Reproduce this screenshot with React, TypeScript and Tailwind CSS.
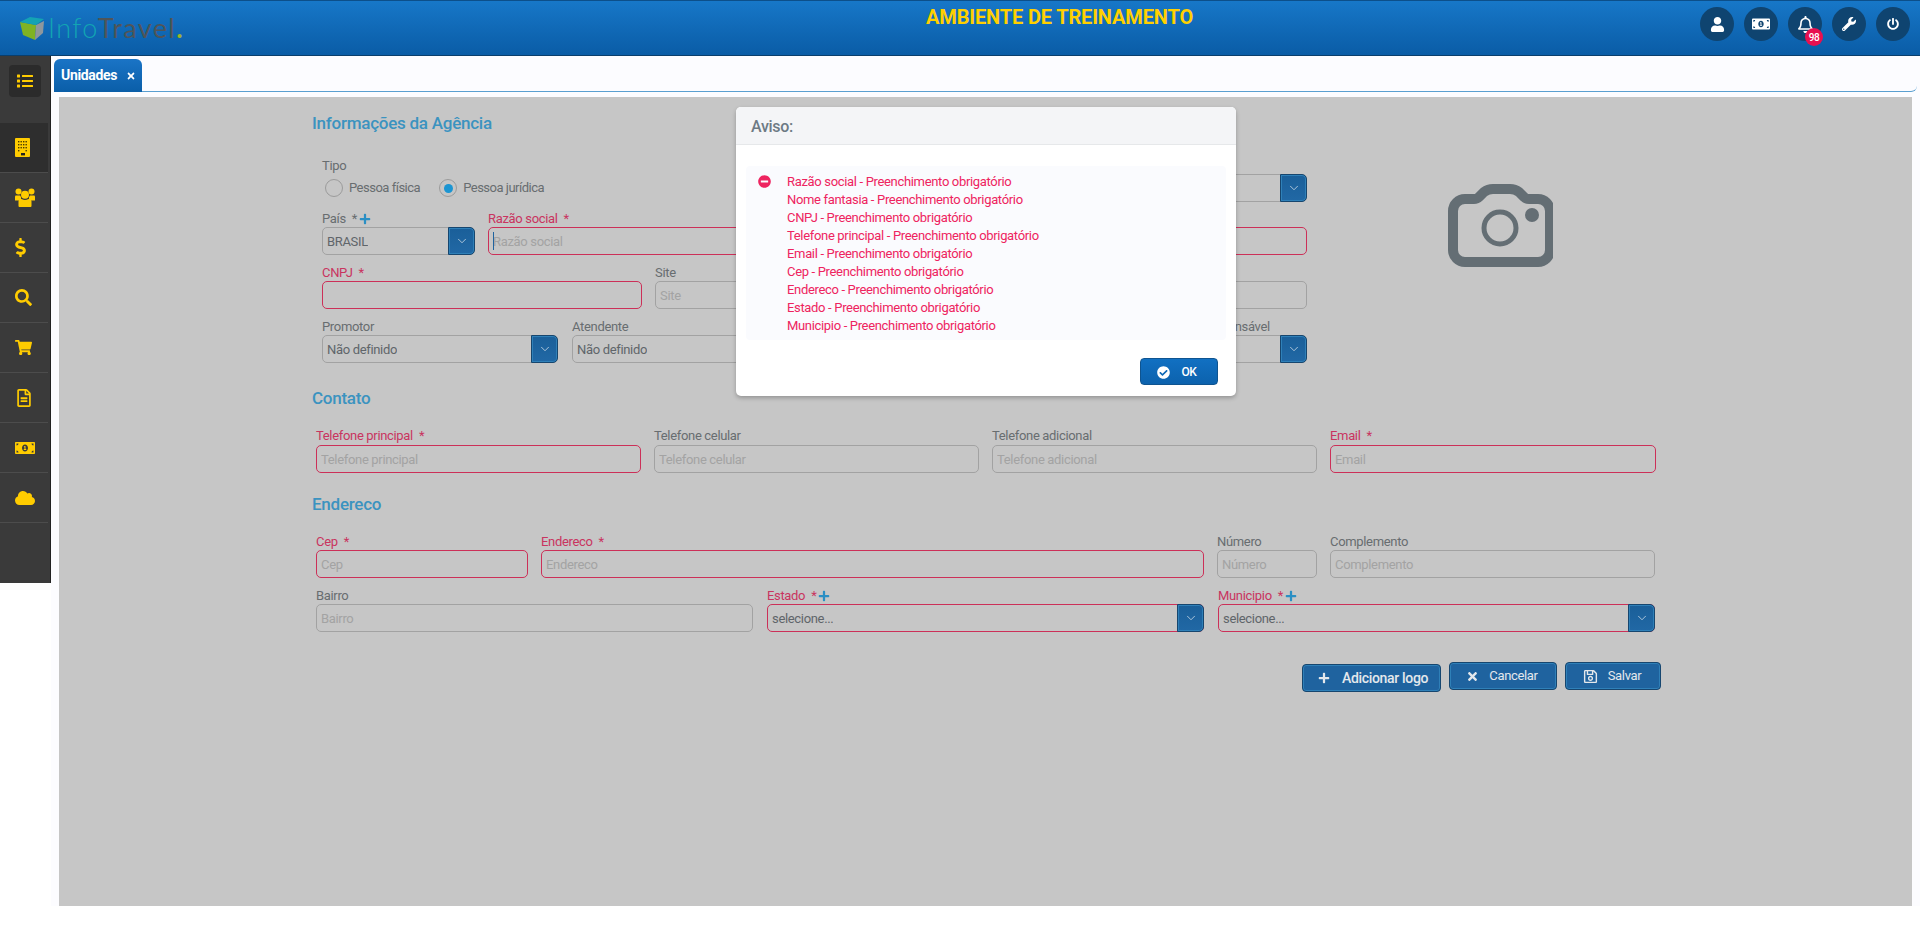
import React from "react";
import { ChevronDown } from "lucide-react";
import {
  FaUser, FaMoneyBillAlt, FaRegBell, FaWrench, FaPowerOff, FaList, FaDollarSign,
  FaSearch, FaShoppingCart, FaRegFileAlt, FaCloud, FaPlus, FaTimes, FaCheckCircle, FaMinusCircle, FaRegSave,
} from "react-icons/fa";

const Building = () => (
  <svg width="15" height="19" viewBox="0 0 15 19">
    <rect x="0" y="0" width="15" height="19" rx="1" fill="#ffcc00" />
    {[3, 6, 9].map((y) =>
      [3, 5.5, 8, 10.5].map((x) => <rect key={`${x}-${y}`} x={x} y={y} width="1.4" height="1.4" fill="#4a3c00" />)
    )}
    <rect x="3" y="12" width="1.4" height="1.4" fill="#4a3c00" />
    <rect x="10.5" y="12" width="1.4" height="1.4" fill="#4a3c00" />
    <rect x="6" y="15" width="4" height="2.4" fill="#222" />
  </svg>
);

const People = () => (
  <svg width="20" height="19" viewBox="0 0 20 19" fill="#ffcc00">
    <circle cx="3.5" cy="3.5" r="3" />
    <circle cx="16.5" cy="3.5" r="3" />
    <path d="M0 8.5 q0 -1 1 -1 h4 l1 1.5 v3.5 h-6 Z" />
    <path d="M20 8.5 q0 -1 -1 -1 h-4 l-1 1.5 v3.5 h6 Z" />
    <circle cx="10" cy="6.8" r="4" />
    <path d="M3.5 18 v-4.5 q0 -2.5 3 -2.5 q3.5 2 7 0 q3 0 3 2.5 V18 q0 1 -1 1 h-11 q-1 0 -1 -1 Z" />
  </svg>
);

const Logo = () => (
  <div className="flex items-center">
    <svg width="25" height="24" viewBox="0 0 25 24">
      <path d="M0 6 L16 9 L15 24 L3 19 Z" fill="#7fb324" />
      <path d="M16 9 L24 5 L23 17 L15 24 Z" fill="#8f979d" />
      <path d="M0 6 L10 1 L24 3 L16 9 Z" fill="#14a3b4" />
    </svg>
    <span className="ml-[3px] font-[family-name:Lato,sans-serif] text-[27px] leading-none font-light tracking-[1.4px] text-[#12a5b3]">Info</span>
    <span className="-ml-[1px] font-[family-name:Lato,sans-serif] text-[27px] leading-none font-normal tracking-[1.4px] text-[#4f5559]">Travel</span>
    <span className="font-[family-name:Lato,sans-serif] text-[27px] leading-none font-bold text-[#9ab52a]">.</span>
  </div>
);

const TopIcon = ({ children, badge }: { children: React.ReactNode; badge?: string }) => (
  <div className="relative flex h-[34px] w-[34px] items-center justify-center rounded-full bg-[#0f4470] text-white">
    {children}
    {badge && (
      <span className="absolute left-[17px] top-[21px] flex h-[18px] w-[18px] items-center justify-center rounded-full bg-[#e8104f] text-[10px] font-medium text-white">
        {badge}
      </span>
    )}
  </div>
);

const Label = ({ text, req, plus, err }: { text: string; req?: boolean; plus?: boolean; err?: boolean }) => (
  <div className={`lbl flex h-[18px] items-center text-[13px] leading-[18px] ${err ? "text-[#c9345f]" : "text-[#686d70]"}`}>
    <span>{text}</span>
    {req && <span className="ml-[6px]">*</span>}
    {plus && <FaPlus className="ml-[2px] text-[#2a8fc4]" size={12} />}
  </div>
);

const Input = ({ text, req, err, w, ph = true, caret }: { text: string; req?: boolean; err?: boolean; w: string; ph?: boolean; caret?: boolean }) => (
  <div className={`${w} shrink-0`}>
    <Label text={text} req={req} err={err} />
    <div className="relative">
      <input
        readOnly
        placeholder={ph ? text : ""}
        className={`block h-[28px] w-full rounded-[5px] border bg-transparent px-[4px] text-[13px] text-[#555] outline-none placeholder:text-[#a3a3a3] ${err ? "border-[#cc3058]" : "border-[#a2a2a2]"}`}
      />
      {caret && <span className="absolute left-[5px] top-[5px] h-[18px] w-px bg-[#1f639f]" />}
    </div>
  </div>
);

const Select = ({ text, value, req, plus, err, w, labelClass }: { text: string; value: string; req?: boolean; plus?: boolean; err?: boolean; w: string; labelClass?: string }) => (
  <div className={`${w} shrink-0`}>
    <div className={labelClass}>
      <Label text={text} req={req} plus={plus} err={err} />
    </div>
    <div className={`flex h-[28px] items-center justify-between rounded-[5px] border ${err ? "border-[#cc3058]" : "border-[#a2a2a2]"}`}>
      <span className="truncate pl-[4px] pt-px text-[13px] text-[#60656a]">{value}</span>
      <span className="-my-px -mr-px flex h-[28px] w-[27px] shrink-0 items-center justify-center rounded-r-[5px] border border-[#16466f] bg-gradient-to-b from-[#1a5f99] to-[#2168a5] text-[#dfe7ee] shadow-[inset_0_0_0_1px_#2f80b8]">
        <ChevronDown size={14} strokeWidth={1.25} />
      </span>
    </div>
  </div>
);

const Title = ({ children, className }: { children: React.ReactNode; className?: string }) => (
  <h2 className={`ml-[253px] translate-y-px text-[17px] font-medium leading-[24px] tracking-[-0.25px] text-[#3b93c0] ${className ?? ""}`}>{children}</h2>
);

const Radio = ({ label, checked }: { label: string; checked?: boolean }) => (
  <div className="flex items-center gap-[6px]">
    <span className="flex h-[18px] w-[18px] items-center justify-center rounded-full border border-[#9b9b9b]">
      {checked && <span className="h-[9px] w-[9px] rounded-full bg-[#1b95d2]" />}
    </span>
    <span className="text-[13px] tracking-[-0.5px] text-[#686d70]">{label}</span>
  </div>
);

const Btn = ({ children, w, className }: { children: React.ReactNode; w: string; className?: string }) => (
  <div className={`flex h-[28px] items-center justify-center gap-[10px] rounded-[4px] border border-[#16466f] bg-[#1f639f] text-[#e4e8ec] shadow-[inset_0_0_0_1px_#2f80b8] ${w} ${className ?? "pr-[2px] text-[13px]"}`}>
    {children}
  </div>
);

const errors = [
  "Razão social", "Nome fantasia", "CNPJ", "Telefone principal", "Email", "Cep", "Endereco", "Estado", "Municipio",
];

const nav = [
  <Building />, <People />, <FaDollarSign size={19} className="-ml-[4px]" />, <FaSearch size={17} />,
  <FaShoppingCart size={17} />, <FaRegFileAlt size={18} />, <FaMoneyBillAlt size={20} />, <FaCloud size={20} />,
];

export default function App() {
  return (
    <div className="flex h-[930px] flex-col overflow-hidden bg-white font-[family-name:Roboto,sans-serif] tracking-[-0.33px]">
      <header className="relative flex h-[56px] shrink-0 items-start justify-between border-t border-b border-t-[#0c4f8a] border-b-[#0a3e6c] bg-gradient-to-b from-[#1777c8] to-[#0a5ca6] pl-[20px] pr-[10px]">
        <div className="mt-[13px]"><Logo /></div>
        <div className="absolute left-[926px] top-[3px] text-[20px] font-bold leading-[26px] tracking-[-0.15px] text-[#ffd000]">AMBIENTE DE TREINAMENTO</div>
        <div className="mt-[6px] flex gap-[10px]">
          <TopIcon><FaUser size={15} /></TopIcon>
          <TopIcon><FaMoneyBillAlt size={18} /></TopIcon>
          <TopIcon badge="98"><FaRegBell size={17} /></TopIcon>
          <TopIcon><FaWrench size={14} /></TopIcon>
          <TopIcon><FaPowerOff size={12} /></TopIcon>
        </div>
      </header>

      <div className="flex flex-1 items-start">
        <aside className="h-[527px] w-[51px] shrink-0 border-r border-r-[#222] bg-[#3a3a3a] pt-[9px]">
          <div className="ml-[9px] flex h-[32px] w-[32px] items-center justify-center rounded-[4px] bg-[#2b2b2b] text-[#ffcc00]">
            <FaList size={16} />
          </div>
          <div className="mt-[26px] w-[48px]">
            {nav.map((icon, i) => (
              <div key={i} className={`flex h-[50px] items-center border-b border-b-[#4c4c4c] pl-[15px] text-[#ffcc00] ${i === 0 ? "bg-[#2e2e2e]" : ""}`}>
                {icon}
              </div>
            ))}
          </div>
        </aside>

        <main className="flex h-[850px] flex-1 flex-col bg-[#fcfcff]">
          <div className="mr-[3px] ml-[3px] mt-[2px] flex h-[34px] shrink-0 items-end rounded-br-[6px] border-b border-b-[#5a9fd0]">
            <div className="-mb-px flex h-[33px] w-[88px] items-center rounded-t-[6px] bg-gradient-to-b from-[#1a74c6] to-[#0a5ea8] pl-[7px] text-[14px] font-bold text-white">
              <span>Unidades</span>
              <FaTimes size={10} className="ml-[9px]" />
            </div>
          </div>

          <div className="relative ml-[8px] mr-[8px] mt-[5px] h-[809px] bg-[#c6c6c6]">
            <div className="pt-[13px]">
              <Title>Informações da Agência</Title>
              <div className="ml-[263px] mt-[22px] w-[985px] [&_.lbl]:translate-y-px">
                <div className="flex justify-between">
                  <div>
                    <Label text="Tipo" />
                    <div className="flex h-[28px] items-center gap-[19px] pl-[3px]">
                      <Radio label="Pessoa física" />
                      <Radio label="Pessoa jurídica" checked />
                    </div>
                  </div>
                  <Select text="Situação" value="" w="w-[235px]" />
                </div>
                <div className="mt-[7px] flex gap-[13px]">
                  <Select text="País" value="BRASIL" req plus w="w-[153px]" />
                  <Input text="Razão social" req err w="w-[409px]" caret />
                  <Input text="Nome fantasia" req err w="w-[397px]" />
                </div>
                <div className="mt-[8px] flex gap-[13px]">
                  <Input text="CNPJ" req err ph={false} w="w-[320px]" />
                  <Input text="Site" w="w-[325px]" />
                  <Input text="Inscrição" w="w-[314px]" />
                </div>
                <div className="mt-[8px] flex gap-[14px]">
                  <Select text="Promotor" value="Não definido" w="w-[236px]" />
                  <Select text="Atendente" value="Não definido" w="w-[236px]" />
                  <Select text="Gerente" value="Não definido" w="w-[236px]" />
                  <Select text="Responsável" value="Não definido" w="w-[235px]" labelClass="pl-[128px]" />
                </div>
              </div>

              <Title className="mt-[22px]">Contato</Title>
              <div className="ml-[257px] mt-[18px] flex gap-[13px]">
                <Input text="Telefone principal" req err w="w-[325px]" />
                <Input text="Telefone celular" w="w-[325px]" />
                <Input text="Telefone adicional" w="w-[325px]" />
                <Input text="Email" req err w="w-[326px]" />
              </div>

              <Title className="mt-[18px]">Endereco</Title>
              <div className="[&_.lbl]:translate-y-px">
                <div className="ml-[257px] mt-[17px] flex gap-[13px]">
                  <Input text="Cep" req err w="w-[212px]" />
                  <Input text="Endereco" req err w="w-[663px]" />
                  <Input text="Número" w="w-[100px]" />
                  <Input text="Complemento" w="w-[325px]" />
                </div>
                <div className="ml-[257px] mt-[8px] flex gap-[14px]">
                  <Input text="Bairro" w="w-[437px]" />
                  <Select text="Estado" value="selecione..." req plus err w="w-[437px]" />
                  <Select text="Municipio" value="selecione..." req plus err w="w-[437px]" />
                </div>
              </div>
            </div>

            <div className="ml-[1243px] mt-[30px] flex items-start gap-[8px]">
              <Btn w="w-[139px]" className="mt-[2px] !justify-start !gap-[12px] pl-[15px] text-[14px] font-medium"><FaPlus size={12} /> Adicionar logo</Btn>
              <Btn w="w-[108px]"><FaTimes size={13} /> Cancelar</Btn>
              <Btn w="w-[96px]"><FaRegSave size={15} /> Salvar</Btn>
            </div>

            <svg className="absolute left-[1389px] top-[87px]" width="105" height="83" viewBox="0 0 105 83" fill="none">
              <path d="M5 27 a12 12 0 0 1 12 -12 h9 q3 0 5 -2 l5 -5 q4 -3 9 -3 h17 q5 0 9 3 l5 5 q2 2 5 2 h9 a12 12 0 0 1 12 12 v39 a12 12 0 0 1 -12 12 H17 a12 12 0 0 1 -12 -12 Z" stroke="#646e74" strokeWidth="10" />
              <circle cx="52" cy="44" r="16" stroke="#646e74" strokeWidth="5" />
              <circle cx="84" cy="31" r="7" fill="#646e74" />
            </svg>

            <div className="absolute left-[677px] top-[10px] h-[289px] w-[500px] overflow-hidden rounded-[5px] bg-white shadow-[0_2px_4px_rgba(0,0,0,0.25)]">
              <div className="flex h-[38px] items-center border-b border-b-[#e6e8ea] bg-[#f4f5f7] pl-[15px] pt-[3px] text-[16px] font-medium text-[#6d7a84]">Aviso:</div>
              <div className="mx-[10px] mt-[21px] flex h-[174px] rounded-[4px] bg-[#fafbfe] pl-[12px] pt-[7px]">
                <FaMinusCircle size={13} className="mt-[2px] shrink-0 text-[#ee2460]" />
                <div className="ml-[16px] text-[13px] leading-[18px] text-[#ee2460]">
                  {errors.map((e) => (
                    <div key={e}>{e} - Preenchimento obrigatório</div>
                  ))}
                </div>
              </div>
              <div className="mr-[18px] mt-[18px] flex justify-end">
                <div className="flex h-[27px] w-[78px] items-center justify-center gap-[11px] rounded-[4px] border border-[#0f5490] bg-gradient-to-b from-[#1170c2] to-[#0c62ad] pr-[4px] pt-px text-[12px] font-medium text-white">
                  <FaCheckCircle size={13} /> OK
                </div>
              </div>
            </div>
          </div>
        </main>
      </div>
    </div>
  );
}
